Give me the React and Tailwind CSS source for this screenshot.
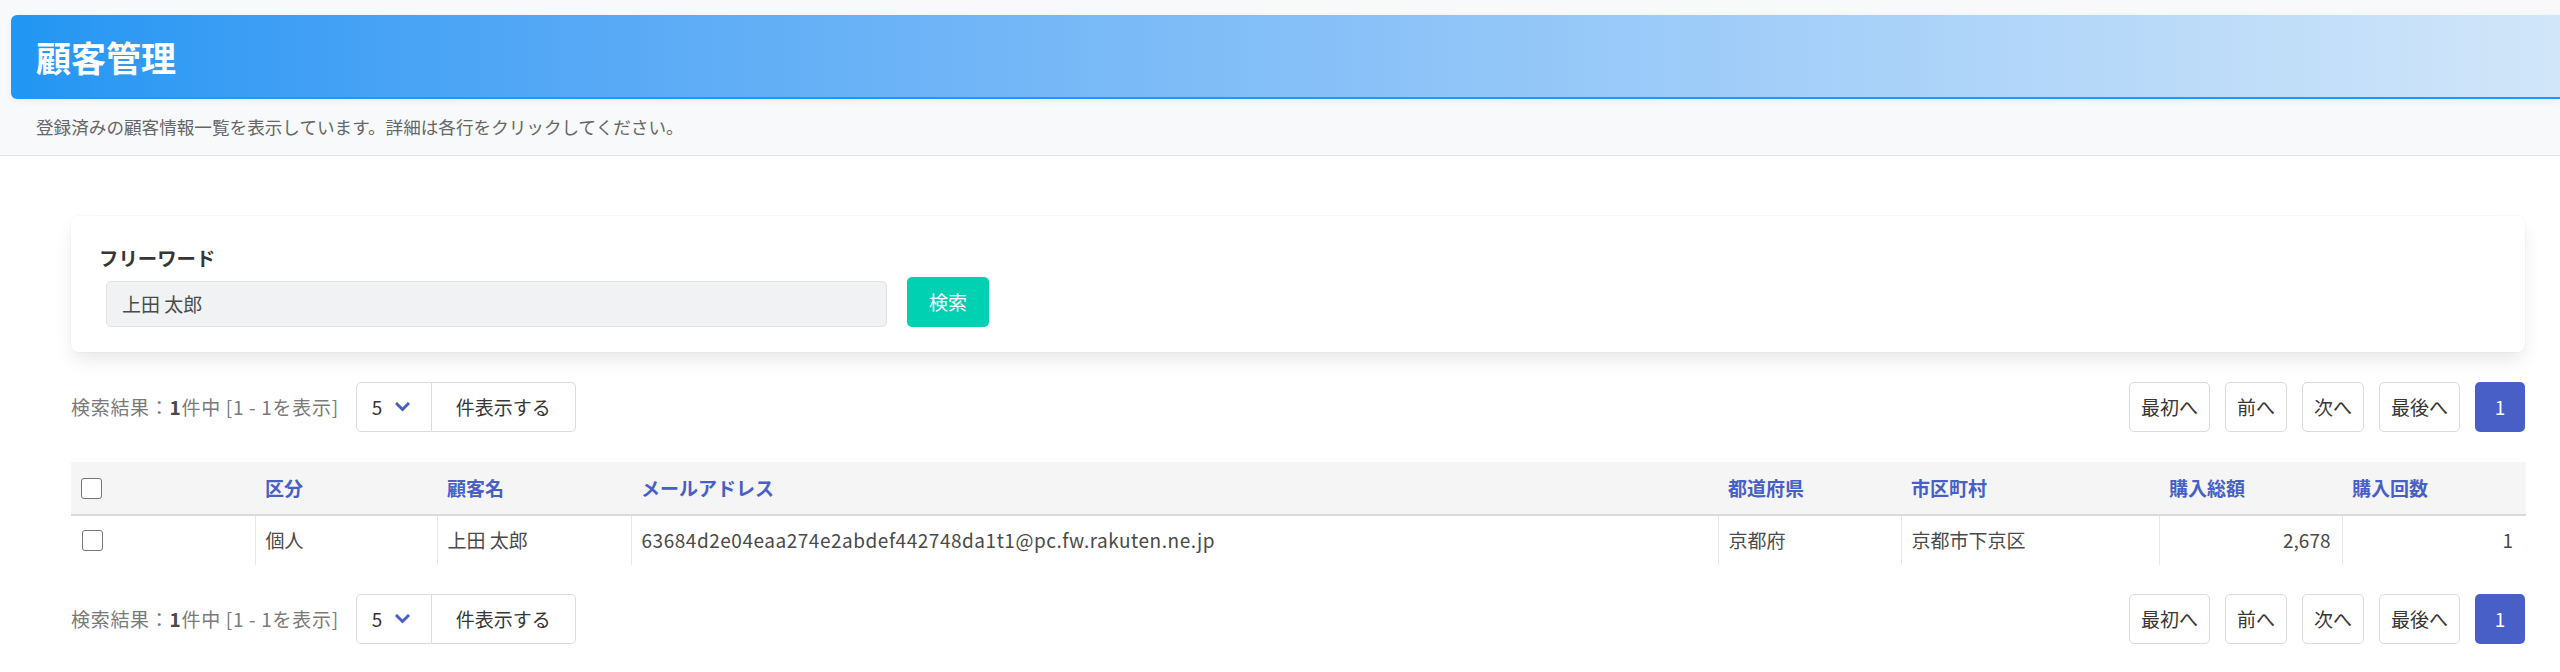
import React from "react";

const FONT = { fontFamily: '"Noto Sans CJK JP", "Noto Sans", sans-serif' };

function Check() {
  return <span className="block w-[21px] h-[21px] rounded-[3px] border-[1.5px] border-[#767676] bg-white" />;
}

function Chevron() {
  return (
    <svg width="15" height="10" viewBox="0 0 15 10" className="ml-[13px]">
      <polyline points="2,2 7.5,7.5 13,2" fill="none" stroke="#485fc7" strokeWidth="3" strokeLinecap="square" />
    </svg>
  );
}

function Controls() {
  return (
    <div className="flex items-center justify-between h-[50px]">
      <div className="flex items-center">
        <span className="text-[19px] text-[#7a7a7a] tracking-[0.7px]">
          検索結果：<b className="text-[#4a4a4a]">1</b>件中 [1 - 1を表示]
        </span>
        <div className="flex ml-[17px] h-[50px]">
          <div className="w-[76px] flex items-center pl-[15px] border border-[#dbdbdb] rounded-l-[5px] text-[19px] text-[#363636]">
            5
            <Chevron />
          </div>
          <button className="px-[24px] border border-l-0 border-[#dbdbdb] rounded-r-[5px] text-[19px] text-[#363636] bg-white">
            件表示する
          </button>
        </div>
      </div>
      <div className="flex items-center gap-[15px]">
        {["最初へ", "前へ", "次へ", "最後へ"].map((t) => (
          <button
            key={t}
            className="h-[50px] px-[11px] border border-[#dbdbdb] rounded-[5px] bg-white text-[19px] text-[#363636]"
          >
            {t}
          </button>
        ))}
        <button className="h-[50px] w-[50px] rounded-[5px] bg-[#485fc7] text-[19px] text-white">1</button>
      </div>
    </div>
  );
}

const cols = [
  { label: "", w: "w-[184px]" },
  { label: "区分", w: "w-[182px]" },
  { label: "顧客名", w: "w-[194px]" },
  { label: "メールアドレス", w: "w-[1087px]" },
  { label: "都道府県", w: "w-[183px]" },
  { label: "市区町村", w: "w-[258px]" },
  { label: "購入総額", w: "w-[183px]" },
  { label: "購入回数", w: "w-[184px]" },
];

export default function App() {
  return (
    <div className="min-h-[672px] bg-white" style={FONT}>
      <div className="bg-[#f8f9fa] pt-[15px] border-b border-[#e3e3e3]">
        <div className="ml-[11px] h-[84px] rounded-l-[6px] border-b-2 border-[#2196f3] bg-linear-to-r from-[#2196f3] to-[#d1e6f9] flex items-center pl-[25px] shadow-[0_2px_6px_rgba(0,0,0,0.06)]">
          <h1 className="text-[35px] font-bold text-white leading-none">顧客管理</h1>
        </div>
        <div className="h-[56px] flex items-center pl-[36px] text-[17.6px] text-[#666666]">
          登録済みの顧客情報一覧を表示しています。詳細は各行をクリックしてください。
        </div>
      </div>

      <div className="pl-[71px] pr-[35px] pt-[60px]">
        <div className="bg-white rounded-[8px] pt-[30px] pb-[25px] pl-[28px] pr-[28px] shadow-[0_10px_19px_-3px_rgba(10,10,10,0.1),0_0_0_1px_rgba(10,10,10,0.02)]">
          <label className="block text-[19.4px] font-bold text-[#363636] leading-[24px]">フリーワード</label>
          <div className="flex items-end mt-[7px]">
            <div className="ml-[7px] w-[781px] h-[46px] flex items-center pl-[15px] bg-[#f1f2f4] border border-[#e0e1e3] rounded-[5px] text-[19px] text-[#4a4a4a]">
              上田 太郎
            </div>
            <button className="ml-[20px] w-[82px] h-[50px] rounded-[5px] bg-[#00d1b2] text-white text-[19px]">検索</button>
          </div>
        </div>

        <div className="mt-[30px]">
          <Controls />
        </div>

        <table className="mt-[30px] w-full table-fixed border-collapse text-[19px]">
          <thead>
            <tr className="bg-[#f5f5f5] h-[53px] border-b-2 border-[#dbdbdb]">
              {cols.map((c, i) => (
                <th key={i} className={`${c.w} text-left font-bold text-[#485fc7] px-[10px]`}>
                  {i === 0 ? <Check /> : c.label}
                </th>
              ))}
            </tr>
          </thead>
          <tbody>
            <tr className="h-[50px] text-[#4a4a4a]">
              <td className="px-[11px]">
                <Check />
              </td>
              <td className="px-[10px] border-l border-[#e6e6e6]">個人</td>
              <td className="px-[10px] border-l border-[#e6e6e6]">上田 太郎</td>
              <td className="px-[10px] border-l border-[#e6e6e6] tracking-[0.53px]">
                63684d2e04eaa274e2abdef442748da1t1@pc.fw.rakuten.ne.jp
              </td>
              <td className="px-[10px] border-l border-[#e6e6e6]">京都府</td>
              <td className="px-[10px] border-l border-[#e6e6e6]">京都市下京区</td>
              <td className="px-[11px] border-l border-[#e6e6e6] text-right">2,678</td>
              <td className="px-[13px] border-l border-[#e6e6e6] text-right">1</td>
            </tr>
          </tbody>
        </table>

        <div className="mt-[29px]">
          <Controls />
        </div>
      </div>
    </div>
  );
}
